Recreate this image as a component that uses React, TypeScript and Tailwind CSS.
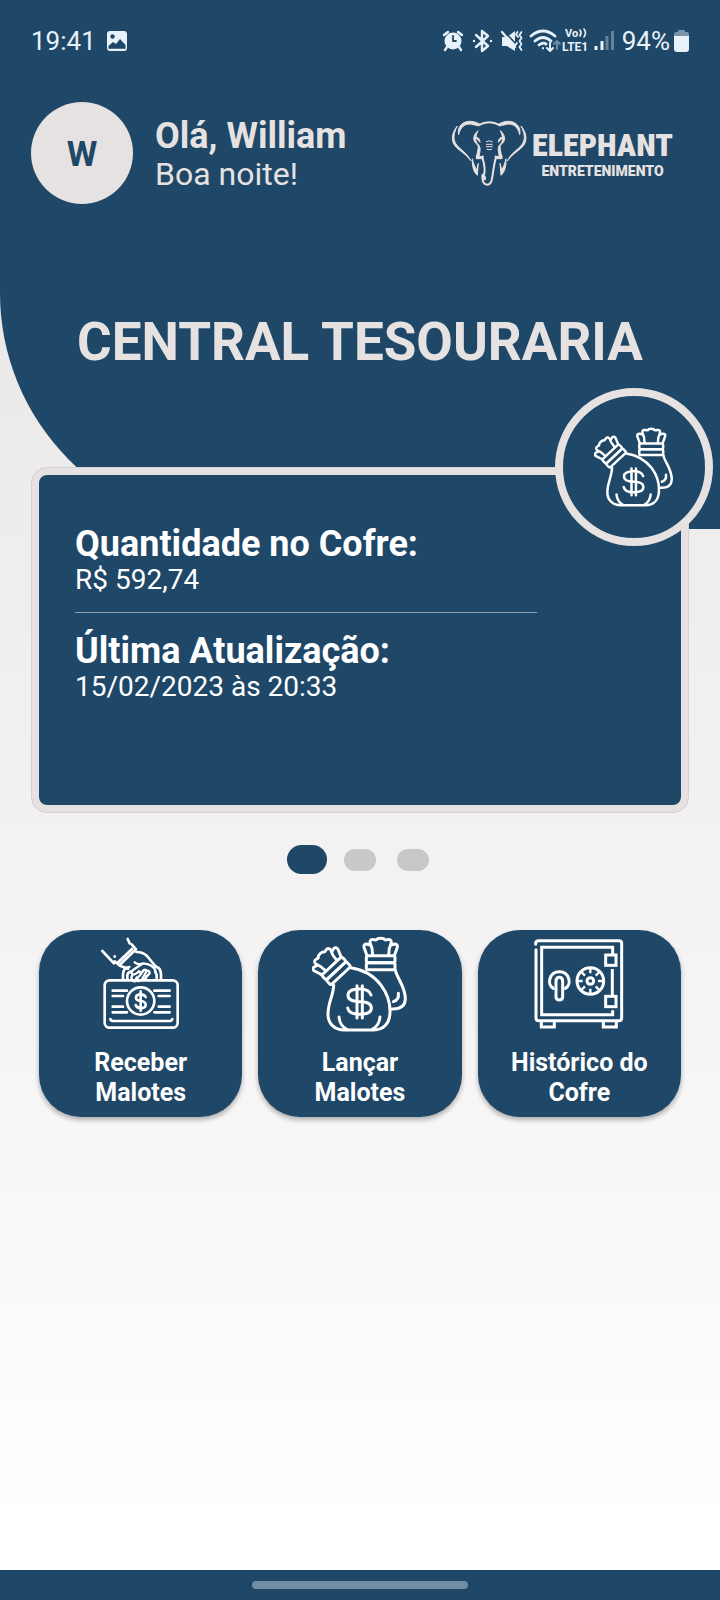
import type { ReactNode } from "react";

function MoneyTie() {
  return (
    <>
      <rect x="-43" y="-43" width="86" height="21" rx="6" />
      <rect x="-43" y="-22" width="86" height="21" rx="6" />
      <path d="M-24 -45C-24 -58 -26 -70 -32 -82Q-32 -94 -20 -91Q-13 -88 -9 -94Q0 -97 9 -94Q13 -88 20 -91Q32 -94 32 -82C26 -70 24 -58 24 -45" />
      <path d="M-31 -75L-42 -78Q-52 -78 -50 -68L-42 -46" />
      <path d="M31 -75L42 -78Q52 -78 50 -68L42 -46" />
    </>
  );
}

function MoneyBagsIcon({ className }: { className: string }) {
  return (
    <svg viewBox="187 48 288 288" className={className} fill="none" stroke="currentColor" strokeWidth="9" strokeLinecap="round" strokeLinejoin="round" aria-hidden="true">
      <g transform="translate(393 150)">
        <MoneyTie />
      </g>
      <g transform="translate(274 168) rotate(-43) scale(.96)">
        <MoneyTie />
      </g>
      <path d="M437 150C441 174 467 198 467 237C466 259 450 268 426 267" />
      <path d="M446 220Q449 240 431 245" />
      <path d="M252 196C251 227 236 245 235 280C234 312 255 330 285 330H372C402 330 420 310 421 278C423 225 386 155 303 143" />
      <path d="M268 291Q270 316 291 328M391 291Q389 316 368 328" />
      <path d="M364 225C360 211 349 207 330 207C307 207 295 214 295 226C295 241 311 245 330 245C350 245 365 250 365 264C365 277 350 283 330 283C310 283 297 279 294 264M322 197V294M338 197V294" />
    </svg>
  );
}

function CashCaseIcon({ className }: { className: string }) {
  return (
    <svg viewBox="187 48 288 288" className={className} fill="none" stroke="currentColor" strokeWidth="8" strokeLinecap="round" strokeLinejoin="round" aria-hidden="true">
      <rect x="222" y="181" width="219" height="142" rx="15" />
      <path d="M239 297Q240 303 249 303H415Q424 303 425 297" />
      <circle cx="330" cy="243" r="41" />
      <path d="M246 212H289M246 228H277M246 260H277M246 277H289M371 212H417M384 228H417M384 260H417M371 277H417" />
      <path d="M345 231C342 225 337 223 330 223C321 223 316 227 316 233C316 241 323 242 330 243C338 244 345 247 345 254C345 261 338 264 330 264C322 264 317 261 315 255M330 214V272" />
      <path d="M277 180V163Q278 143 296 141M391 180V163Q390 143 375 140M290 180V166Q291 156 302 154M378 180V165L374 155" />
      <path d="M215 93L250 130M291 57L297 70M303 73L316 88L266 136L252 124M304 87L260 129" />
      <path d="M252 109V110" />
      <path d="M317 96Q337 96 349 108L374 138M268 137L292 146" />
      <path strokeWidth="7" d="M374 154C371 139 354 131 338 130C326 135 319 133 312 127M334 132L307 150Q299 159 306 163Q312 165 325 154M306 163L302 173Q304 185 314 184L318 172M325 154Q333 158 328 166L317 178Q321 187 331 180M328 166L339 150Q345 147 348 153L334 178Q345 180 348 168M348 152Q357 151 357 160L348 170" />
    </svg>
  );
}

function SafeIcon({ className }: { className: string }) {
  return (
    <svg viewBox="214 50 288 288" className={className} fill="none" stroke="currentColor" strokeWidth="9" aria-hidden="true">
      <path strokeLinecap="round" d="M228 75V71Q229 64 236 64H477Q486 64 486 72V295Q486 304 477 304H238Q229 304 229 295V91" />
      <path d="M459 106V84H246V286H459V273M458 149V229" />
      <rect x="438" y="107" width="31" height="31" />
      <rect x="438" y="231" width="31" height="31" />
      <path d="M245 305V323H284V305M431 305V323H470V305" />
      <path strokeLinecap="round" d="M281 207C261 196 268 157 299 157C330 157 337 196 317 207" />
      <path d="M289 186Q289 174 299 174Q309 174 309 186V233Q308 242 299 242Q290 242 289 233Z" />
      <circle cx="392" cy="185" r="40" />
      <circle cx="392" cy="185" r="10" />
      <path strokeWidth="7" d="M392 147V162M392 208V223M354 185H369M415 185H430M365 158L376 169M408 201L419 212M419 158L408 169M376 201L365 212" />
    </svg>
  );
}

function ElephantMark() {
  const half = (
    <>
      <path d="M31 36C12 58 11 85 29 101C45 115 60 123 72 141C59 115 43 110 30 94C16 77 20 57 31 36Z" />
      <path d="M35 62C28 30 62 9 99 31Q91 36 82 33C59 24 40 36 35 62Z" />
      <path d="M93 50C74 67 79 83 90 91C98 100 90 109 89 133H96C97 114 103 106 96 94C84 82 83 72 93 50Z" />
      <path d="M84 69Q99 70 99 85L92 77Z" />
      <path d="M76 134C75 158 80 174 91 184L94 148L89 167C82 157 79 146 76 134Z" />
      <path d="M88 124Q96 131 109 126L107 134H88Z" />
    </>
  );
  return (
    <svg viewBox="0 0 255 234" className="h-[78px] w-[85px] shrink-0" fill="currentColor" stroke="currentColor" strokeWidth="3" aria-hidden="true">
      {half}
      <g transform="matrix(-1 0 0 1 253 0)">{half}</g>
      <g fill="none" strokeLinecap="round">
        <path strokeWidth="6" d="M94 34Q126 16 159 34" />
        <path strokeWidth="6" d="M106 130C112 150 117 170 110 184Q116 190 113 196Q103 192 107 182M106 190C107 218 128 217 134 199C139 177 140 151 147 130" />
        <path strokeWidth="3" d="M118 83Q127 77 136 83M118 91H136M118 98H136M120 106Q127 109 134 106" />
      </g>
    </svg>
  );
}

function StatusIcons() {
  return (
    <svg viewBox="0 0 174 30" className="h-[30px] w-[174px]" fill="none" stroke="currentColor" strokeWidth="2.4" strokeLinecap="round" strokeLinejoin="round" role="img" aria-label="Alarme, Bluetooth, vibrar, Wi-Fi, VoLTE e sinal">
      <circle cx="11" cy="15" r="8.500" fill="currentColor" stroke="none" />
      <path d="M5 21L3 24M17 21L19 24M2 9L6 6M20 9L16 6" />
      <path stroke="#1f4767" strokeWidth="1.8" d="M11 10V15H14" />
      <path d="M34 9L46 20L40 25V5L46 10L34 21M32 15V15.1M49 15V15.1" />
      <path fill="currentColor" stroke="none" d="M60 11H65L73 5V25L65 20H60Z" />
      <path stroke="#1f4767" strokeWidth="1.5" strokeLinecap="butt" d="M62 5L75 19" />
      <path strokeWidth="2.2" d="M60 6L73 21" />
      <path strokeWidth="1.8" d="M75.500 6L74 8.500L76 11M79.500 6L77.500 9L79.500 12L77.500 15L79.500 18L77.500 21L79.500 24M75 17L73.500 19" />
      <path strokeWidth="2.8" d="M89 10Q101 0 113 10M93 15Q101 8 109 15M97 19Q101 16 104 18" />
      <path strokeWidth="2" d="M101 22V22.5M108 17V24M105 22L108 25L111 22" />
      <path strokeWidth="2" opacity=".4" d="M115 23V16M112 18L115 15L118 18" />
      <g fill="currentColor" stroke="none" className="font-[Roboto,sans-serif] font-bold">
        <text x="123" y="11" fontSize="11">Vo</text>
        <text x="120" y="25" fontSize="12">LTE1</text>
      </g>
      <path strokeWidth="1.6" d="M138 4Q140 7 138 10M142 3Q145 7 142 11" />
      <path strokeLinecap="butt" strokeWidth="3" d="M154 24V20M160 24V15" />
      <path strokeLinecap="butt" strokeWidth="3" opacity=".35" d="M165 24V10M170.500 24V5" />
    </svg>
  );
}

function Action({ icon, children }: { icon: ReactNode; children: ReactNode }) {
  return (
    <button type="button" className="flex h-[187px] flex-1 flex-col items-center rounded-[42px] bg-[#1f4767] pt-1.5 text-center text-[25px] leading-[30px] font-bold text-white shadow-[0_3px_5px_rgba(0,0,0,0.3)]">
      {icon}
      <span className="mt-4 px-4">{children}</span>
    </button>
  );
}

export default function App() {
  return (
    <div className="flex min-h-screen flex-col bg-linear-to-b from-[#e7e5e3] via-[#f3f1f2] via-53% to-white to-96% font-[Roboto,sans-serif]">
      <header className="h-[529px] rounded-bl-[236px] bg-[#1f4767] text-[#e6e2e1]">
        <div className="flex h-[82px] items-center justify-between px-[31px] text-[#e8f2fa]">
          <div className="flex items-center gap-2.5">
            <span className="text-[26px] leading-8">19:41</span>
            <svg viewBox="0 0 22 22" className="size-[22px]" role="img" aria-label="Imagem">
              <rect x="1" y="1" width="20" height="20" rx="3" fill="currentColor" />
              <circle cx="6.500" cy="6.500" r="2.200" fill="#1f4767" />
              <path d="M2.500 16L7 12L10 14L14 9L19.500 15V18.500H2.500Z" fill="#1f4767" />
              <path d="M2.500 18.500V18L7 15L10 17L14.500 13L19.500 18V18.500Z" fill="#1f4767" />
            </svg>
          </div>
          <div className="flex items-center gap-1">
            <StatusIcons />
            <span className="ml-0.5 text-[26px] leading-8">94%</span>
            <svg viewBox="0 0 15 22" className="h-[22px] w-[15px]" fill="currentColor" role="img" aria-label="Bateria">
              <path opacity=".45" d="M4 1Q4 0 5 0H10Q11 0 11 1V2H13Q15 2 15 5V6H0V5Q0 2 2 2H4Z" />
              <path d="M0 6H15V19Q15 22 12 22H3Q0 22 0 19Z" />
            </svg>
          </div>
        </div>

        <div className="flex items-center pt-5 pr-[47px] pl-[31px]">
          <div className="flex size-[102px] items-center justify-center rounded-full bg-[#e6e2e1] pt-1 text-[35px] font-bold text-[#1f4767]">W</div>
          <div className="ml-[22px] pt-1">
            <p className="text-4xl leading-[38px] font-bold">Olá, William</p>
            <p className="text-[32px] leading-[38px]">Boa noite!</p>
          </div>
          <div className="ml-auto flex items-center">
            <ElephantMark />
            <div className="flex flex-col items-center">
              <span className="font-['Impact','Roboto_Condensed','Liberation_Sans_Narrow',sans-serif] text-[32px] leading-9 font-black">ELEPHANT</span>
              <span className="text-[14px] leading-4 font-black">ENTRETENIMENTO</span>
            </div>
          </div>
        </div>

        <h1 className="mt-[108px] text-center text-[53px] leading-[60px] font-bold">CENTRAL TESOURARIA</h1>
      </header>

      <main className="-mt-[62px] flex-1">
        <section className="relative mx-[31px] h-[346px] rounded-2xl border-8 border-[#e6e2e1] bg-[#1f4767] px-9 pt-[49px] text-white outline-1 -outline-offset-1 outline-[#d3d2d3]">
          <h2 className="text-4xl leading-10 font-bold">Quantidade no Cofre:</h2>
          <p className="text-[28px] leading-8">R$ 592,74</p>
          <hr className="mt-4 mr-[108px] border-[#8ba0b1]" />
          <h2 className="mt-[18px] text-4xl leading-10 font-bold">Última Atualização:</h2>
          <p className="text-[28px] leading-8">15/02/2023 às 20:33</p>
          <div className="absolute -top-[87px] -right-8 flex size-[158px] items-center justify-center rounded-full border-8 border-[#e6e2e1] bg-[#1f4767]">
            <MoneyBagsIcon className="size-20" />
          </div>
        </section>

        <nav className="mt-8 flex items-center justify-center pr-1" aria-label="Páginas do cartão">
          <button type="button" aria-label="Página 1" aria-current="true" className="h-[29px] w-10 rounded-full bg-[#1f4767]" />
          <button type="button" aria-label="Página 2" className="ml-[17px] h-[22px] w-8 rounded-full bg-[#c8c8c8]" />
          <button type="button" aria-label="Página 3" className="ml-[21px] h-[22px] w-8 rounded-full bg-[#c8c8c8]" />
        </nav>

        <div className="mt-14 flex gap-4 px-[39px]">
          <Action icon={<CashCaseIcon className="size-24" />}>Receber<br />Malotes</Action>
          <Action icon={<MoneyBagsIcon className="size-24" />}>Lançar<br />Malotes</Action>
          <Action icon={<SafeIcon className="size-24" />}>Histórico do<br />Cofre</Action>
        </div>
      </main>

      <footer className="flex h-[30px] items-center justify-center bg-[#1f4767]">
        <div className="h-2 w-3/10 rounded-full bg-[#728da2]" />
      </footer>
    </div>
  );
}
